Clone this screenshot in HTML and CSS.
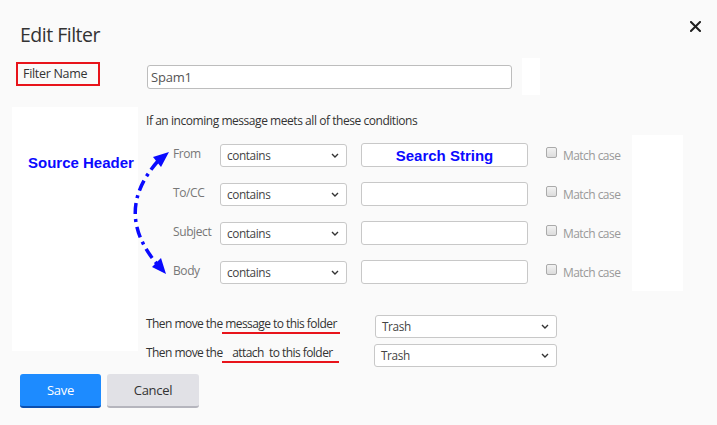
FILE: index.html
```html
<!DOCTYPE html>
<html>
<head>
<meta charset="utf-8">
<link rel="stylesheet" href="styles.css">
</head>
<body>
<div class="dialog">
  <header class="head">
    <h1 class="title">Edit Filter</h1>
    <button class="close" aria-label="Close">
      <svg width="11" height="11" viewBox="0 0 11 11"><path d="M1 1L10 10M10 1L1 10" stroke="#1f1f1f" stroke-width="2" stroke-linecap="square"/></svg>
    </button>
  </header>

  <div class="name-row">
    <div class="name-label">Filter Name</div>
    <div class="name-input">Spam1</div>
    <div class="tab-blank"></div>
  </div>

  <div class="main">
    <aside class="side"><span class="source">Source Header</span></aside>
    <div class="conds">
      <p class="intro">If an incoming message meets all of these conditions</p>
      <div class="cond-wrap">
        <div class="cond-list">
          <div class="row">
            <span class="lbl">From</span>
            <div class="sel">contains<svg class="chev" width="8" height="5" viewBox="0 0 8 5"><path d="M1 1L4 4L7 1" fill="none" stroke="#333" stroke-width="1.4"/></svg></div>
            <div class="txt"><span class="search">Search String</span></div>
            <span class="cb"></span><span class="mc">Match case</span>
          </div>
          <div class="row">
            <span class="lbl">To/CC</span>
            <div class="sel">contains<svg class="chev" width="8" height="5" viewBox="0 0 8 5"><path d="M1 1L4 4L7 1" fill="none" stroke="#333" stroke-width="1.4"/></svg></div>
            <div class="txt"></div>
            <span class="cb"></span><span class="mc">Match case</span>
          </div>
          <div class="row">
            <span class="lbl">Subject</span>
            <div class="sel">contains<svg class="chev" width="8" height="5" viewBox="0 0 8 5"><path d="M1 1L4 4L7 1" fill="none" stroke="#333" stroke-width="1.4"/></svg></div>
            <div class="txt"></div>
            <span class="cb"></span><span class="mc">Match case</span>
          </div>
          <div class="row">
            <span class="lbl">Body</span>
            <div class="sel">contains<svg class="chev" width="8" height="5" viewBox="0 0 8 5"><path d="M1 1L4 4L7 1" fill="none" stroke="#333" stroke-width="1.4"/></svg></div>
            <div class="txt"></div>
            <span class="cb"></span><span class="mc">Match case</span>
          </div>
        </div>
        <div class="right-blank"></div>
      </div>

      <div class="moves">
        <div class="move-row">
          <span class="move-text">Then move the <span class="ul ul1">message to this folder</span></span>
          <div class="sel sel-wide">Trash<svg class="chev" width="8" height="5" viewBox="0 0 8 5"><path d="M1 1L4 4L7 1" fill="none" stroke="#333" stroke-width="1.4"/></svg></div>
        </div>
        <div class="move-row">
          <span class="move-text">Then move the <span class="ul ul2">attach&nbsp; to this folder</span></span>
          <div class="sel sel-wide sel-2">Trash<svg class="chev" width="8" height="5" viewBox="0 0 8 5"><path d="M1 1L4 4L7 1" fill="none" stroke="#333" stroke-width="1.4"/></svg></div>
        </div>
      </div>
    </div>
  </div>

  <div class="actions">
    <button class="btn btn-save">Save</button>
    <button class="btn btn-cancel">Cancel</button>
  </div>

  <svg class="arrow" width="60" height="140" viewBox="130 145 60 140">
    <path d="M158 161 Q113 212 157 264" fill="none" stroke="#0a0aff" stroke-width="3.5" stroke-dasharray="11 5 3 5"/>
    <polygon points="169,152 153,157 161,167" fill="#0a0aff"/>
    <polygon points="166,274 152,267 161,258" fill="#0a0aff"/>
  </svg>
</div>
</body>
</html>
```

FILE: styles.css
```css
* { box-sizing: border-box; }

html, body {
  margin: 0;
  padding: 0;
  background: #fafafa;
}

body {
  font-family: "Open Sans", "Noto Sans", sans-serif;
  color: #333;
  font-size: 12px;
  letter-spacing: -0.4px;
}

.dialog {
  position: relative;
  width: 717px;
  height: 425px;
}

.head {
  height: 58px;
  display: flex;
  justify-content: space-between;
  align-items: flex-start;
  padding-left: 20px;
  padding-right: 16px;
}

.title {
  margin: 23px 0 0;
  font-size: 19.5px;
  line-height: 24px;
  font-weight: 400;
  letter-spacing: -0.5px;
  color: #333;
}

.close {
  margin-top: 21px;
  padding: 0;
  border: 0;
  background: none;
  width: 11px;
  height: 11px;
  display: flex;
}

.name-row {
  display: flex;
  align-items: flex-start;
  padding-left: 16px;
}

.name-label {
  margin-top: 4px;
  width: 84px;
  height: 24px;
  border: 2px solid #e8141b;
  padding-left: 5px;
  font-size: 12.5px;
  letter-spacing: -0.3px;
  line-height: 19px;
  color: #333;
}

.name-input {
  margin-left: 47px;
  margin-top: 7px;
  width: 365px;
  height: 24px;
  border: 1px solid #bdbdbd;
  border-radius: 3px;
  background: #fff;
  padding-left: 3px;
  font-size: 13px;
  letter-spacing: -0.2px;
  line-height: 22px;
  color: #555;
}

.tab-blank {
  margin-left: 10px;
  width: 18px;
  height: 37px;
  background: #fff;
}

.main {
  display: flex;
  align-items: flex-start;
  margin-top: 12px;
}

.side {
  margin-left: 12px;
  width: 126px;
  height: 244px;
  background: #fff;
  padding: 48px 0 0 16px;
}

.source {
  font-family: "Liberation Sans", Arial, sans-serif;
  font-weight: 700;
  font-size: 15px;
  letter-spacing: 0;
  line-height: 16px;
  color: #0a0aff;
  white-space: nowrap;
}

.conds {
  padding-left: 8px;
}

.intro {
  margin: 6px 0 0;
  font-size: 12px;
  letter-spacing: -0.45px;
  line-height: 16px;
  color: #333;
}

.cond-wrap {
  display: flex;
  margin-top: 6px;
}

.cond-list {
  width: 486px;
  padding-top: 8px;
  display: flex;
  flex-direction: column;
  gap: 15px;
}

.row {
  height: 24px;
  display: flex;
  align-items: center;
  padding-left: 27px;
}

.lbl {
  width: 47px;
  color: #777;
  font-size: 12px;
  margin-top: -3px;
}

.sel {
  position: relative;
  width: 127px;
  height: 23px;
  background: #fff;
  border: 1px solid #c8c8c8;
  border-radius: 3px;
  padding-left: 6px;
  font-size: 11.8px;
  letter-spacing: -0.4px;
  line-height: 21px;
  color: #444;
  display: flex;
  align-items: center;
  justify-content: space-between;
  padding-right: 7px;
}

.chev { flex: none; }

.txt {
  margin-left: 14px;
  width: 167px;
  height: 24px;
  background: #fff;
  border: 1px solid #c8c8c8;
  border-radius: 3px;
  display: flex;
  align-items: center;
  justify-content: center;
}

.search {
  font-family: "Liberation Sans", Arial, sans-serif;
  font-weight: 700;
  font-size: 15px;
  letter-spacing: 0;
  color: #0a0aff;
}

.cb {
  margin-left: 18px;
  margin-top: -5px;
  width: 11px;
  height: 11px;
  border: 1px solid #aaa;
  border-radius: 2px;
  background: linear-gradient(#f2f2f2, #dcdcdc);
}

.mc {
  margin-left: 6px;
  color: #999;
  font-size: 12px;
  letter-spacing: -0.55px;
}

.right-blank {
  width: 51px;
  height: 156px;
  background: #fff;
}

.moves {
  margin-top: 24px;
  display: flex;
  flex-direction: column;
  gap: 6px;
}

.move-row {
  display: flex;
  align-items: center;
  height: 23px;
}

.move-text {
  width: 229px;
  font-size: 12px;
  letter-spacing: -0.55px;
  color: #333;
  margin-top: -6px;
  white-space: nowrap;
}

.ul {
  border-bottom: 2px solid #e8141b;
}

.ul1 {
  margin-left: -3px;
  padding: 0 3px 0;
}

.ul2 {
  margin-left: -3px;
  padding: 0 6px 0 10px;
}

.sel-wide {
  width: 182px;
  padding-left: 6px;
}

.sel-2 {
  margin-left: -1px;
  width: 183px;
}

.actions {
  display: flex;
  gap: 6px;
  padding-left: 20px;
  margin-top: 7px;
}

.btn {
  height: 34px;
  border: 0;
  border-radius: 3px;
  font-family: "Open Sans", "Noto Sans", sans-serif;
  font-size: 13px;
  letter-spacing: -0.3px;
  padding: 0;
}

.btn-save {
  width: 81px;
  background: #1d8bff;
  border-bottom: 2px solid #0a4fb0;
  color: #fff;
}

.btn-cancel {
  width: 92px;
  background: #e1e1e6;
  border-bottom: 2px solid #b5b5bd;
  color: #333;
}

.arrow {
  position: absolute;
  left: 130px;
  top: 145px;
  overflow: visible;
}
```
